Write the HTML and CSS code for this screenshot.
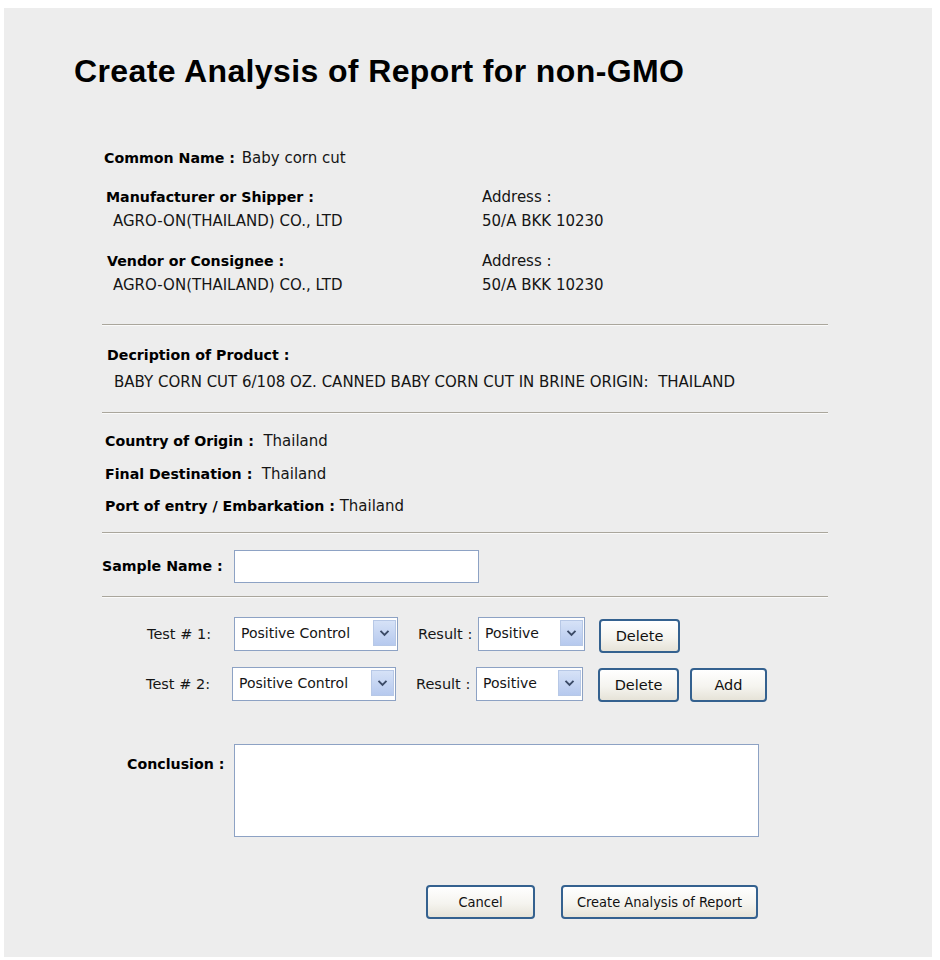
FILE: index.html
```html
<!DOCTYPE html>
<html>
<head>
<meta charset="utf-8">
<title>Create Analysis of Report for non-GMO</title>
<link rel="stylesheet" href="styles.css">
</head>
<body>
<div class="page">
  <h1 class="title">Create Analysis of Report for non-GMO</h1>
  <div class="content">
    <div class="line common"><b>Common Name :</b> Baby corn cut</div>

    <div class="party">
      <div class="col">
        <div class="line lbl"><b>Manufacturer or Shipper :</b></div>
        <div class="line val">AGRO-ON(THAILAND) CO., LTD</div>
      </div>
      <div class="col addr">
        <div class="line">Address :</div>
        <div class="line">50/A BKK 10230</div>
      </div>
    </div>

    <div class="party second">
      <div class="col">
        <div class="line lbl"><b>Vendor or Consignee :</b></div>
        <div class="line val">AGRO-ON(THAILAND) CO., LTD</div>
      </div>
      <div class="col addr">
        <div class="line">Address :</div>
        <div class="line">50/A BKK 10230</div>
      </div>
    </div>

    <hr class="sep sep1">

    <div class="desc">
      <div class="line lbl"><b>Decription of Product :</b></div>
      <div class="line val desc-val">BABY CORN CUT 6/108 OZ. CANNED BABY CORN CUT IN BRINE ORIGIN:&nbsp; THAILAND</div>
    </div>

    <hr class="sep sep2">

    <div class="origin">
      <div class="oline"><b>Country of Origin :</b>&nbsp; Thailand</div>
      <div class="oline"><b>Final Destination :</b>&nbsp; Thailand</div>
      <div class="oline"><b>Port of entry / Embarkation :</b> Thailand</div>
    </div>

    <hr class="sep sep3">

    <div class="sample">
      <label class="sample-lbl"><b>Sample Name :</b></label>
      <input class="text-input" type="text">
    </div>

    <hr class="sep sep4">

    <div class="tests">
      <div class="test-row">
        <span class="test-lbl">Test # 1:</span>
        <div class="select sel-test"><span class="sel-text">Positive Control</span><span class="sel-arrow"><svg width="11" height="8" viewBox="0 0 11 8"><path d="M1.5 1.8 L5.5 5.8 L9.5 1.8" fill="none" stroke="#3b4a66" stroke-width="1.9"/></svg></span></div>
        <span class="res-lbl">Result :</span>
        <div class="select sel-res"><span class="sel-text">Positive</span><span class="sel-arrow"><svg width="11" height="8" viewBox="0 0 11 8"><path d="M1.5 1.8 L5.5 5.8 L9.5 1.8" fill="none" stroke="#3b4a66" stroke-width="1.9"/></svg></span></div>
        <button class="btn btn-del" type="button">Delete</button>
      </div>
      <div class="test-row row2">
        <span class="test-lbl">Test # 2:</span>
        <div class="select sel-test"><span class="sel-text">Positive Control</span><span class="sel-arrow"><svg width="11" height="8" viewBox="0 0 11 8"><path d="M1.5 1.8 L5.5 5.8 L9.5 1.8" fill="none" stroke="#3b4a66" stroke-width="1.9"/></svg></span></div>
        <span class="res-lbl">Result :</span>
        <div class="select sel-res"><span class="sel-text">Positive</span><span class="sel-arrow"><svg width="11" height="8" viewBox="0 0 11 8"><path d="M1.5 1.8 L5.5 5.8 L9.5 1.8" fill="none" stroke="#3b4a66" stroke-width="1.9"/></svg></span></div>
        <button class="btn btn-del" type="button">Delete</button>
        <button class="btn btn-add" type="button">Add</button>
      </div>
    </div>

    <div class="conclusion">
      <label class="concl-lbl"><b>Conclusion :</b></label>
      <textarea class="concl-area"></textarea>
    </div>

    <div class="actions">
      <button class="btn btn-cancel" type="button">Cancel</button>
      <button class="btn btn-create" type="button">Create Analysis of Report</button>
    </div>
  </div>
</div>
</body>
</html>
```

FILE: styles.css
```css
html, body {
  margin: 0;
  padding: 0;
  background: #ffffff;
}

body {
  font-family: "DejaVu Sans", sans-serif;
  font-size: 15px;
  color: #151515;
}

.page {
  margin: 8px 8px 0 4px;
  width: 928px;
  height: 949px;
  background: #ededed;
  box-sizing: border-box;
  padding-top: 45px;
}

.title {
  margin: 0 0 0 70px;
  font-family: "Liberation Sans", Arial, sans-serif;
  font-weight: bold;
  font-size: 32px;
  line-height: 36px;
  color: #000;
  letter-spacing: 0.38px;
  height: 35px;
}

.content {
  margin-left: 98px;
  width: 726px;
}

.line {
  line-height: 24px;
  height: 24px;
  white-space: nowrap;
}

b {
  font-weight: bold;
  font-size: 14.2px;
  color: #000;
}

.common {
  margin-top: 58px;
  padding-left: 2px;
}

.common b {
  margin-right: 2px;
}

.party {
  display: grid;
  grid-template-columns: 380px 1fr;
  margin-top: 15px;
}

.party.second {
  margin-top: 16px;
}

.party .lbl {
  padding-left: 4px;
}

.party .val {
  padding-left: 11px;
}

.party.second .lbl {
  padding-left: 5px;
}

.sep {
  border: none;
  border-top: 1px solid #aaa69c;
  border-bottom: 1px solid #fafafa;
  height: 0;
  margin: 0;
  width: 726px;
}

.sep1 {
  margin-top: 27px;
}

.desc {
  margin-top: 17px;
}

.desc .lbl {
  padding-left: 5px;
}

.desc-val {
  margin-top: 3px;
  padding-left: 12px;
}

.sep2 {
  margin-top: 18px;
}

.origin {
  margin-top: 15px;
  padding-left: 3px;
}

.oline {
  height: 32.5px;
  line-height: 24px;
  white-space: nowrap;
}

.sep3 {
  margin-top: 5px;
}

.sample {
  display: flex;
  align-items: center;
  margin-top: 16px;
  height: 33px;
}

.sample-lbl {
  width: 132px;
}

.text-input {
  width: 245px;
  height: 33px;
  box-sizing: border-box;
  border: 1px solid #8da2c4;
  background: #fff;
  margin: 0;
  padding: 0 4px;
  font: inherit;
}

.sep4 {
  margin-top: 13px;
}

.tests {
  margin-top: 19px;
  font-size: 14.5px;
}

.test-row {
  display: flex;
  align-items: center;
  height: 34px;
}

.test-row.row2 {
  margin-top: 16px;
}

.test-lbl {
  padding-left: 45px;
  box-sizing: border-box;
  flex: none;
  width: 132px;
}

.row2 .test-lbl {
  padding-left: 44px;
  width: 130px;
}

.select {
  display: flex;
  align-items: center;
  height: 34px;
  box-sizing: border-box;
  border: 1px solid #8da2c4;
  background: #fff;
  padding: 2px 1px 4px 6px;
  flex: none;
  font-size: 14px;
}

.sel-test {
  width: 164px;
}

.sel-res {
  width: 107px;
}

.sel-text {
  flex: 1;
  white-space: nowrap;
}

.sel-arrow {
  width: 23px;
  height: 26px;
  box-sizing: border-box;
  border: 1px solid #b7c8e6;
  background: linear-gradient(#d6e2f7, #b6c9ee);
  display: flex;
  align-items: center;
  justify-content: center;
}

.res-lbl {
  margin-left: 20px;
  width: 60px;
  flex: none;
  white-space: nowrap;
}

.btn {
  font-family: "DejaVu Sans Condensed", "DejaVu Sans", sans-serif;
  font-size: 14.5px;
  color: #111;
  height: 34px;
  box-sizing: border-box;
  border: 2px solid #34618f;
  border-radius: 4px;
  background: linear-gradient(#ffffff, #f5f4ef 55%, #e6e3d8);
  padding: 0;
  margin: 0;
}

.btn-del,
.btn-add {
  font-family: "DejaVu Sans", sans-serif;
  font-size: 14.5px;
}

.btn-del {
  width: 81px;
  margin-left: 14px;
  margin-top: 5px;
}

.row2 .btn-del {
  margin-top: 2px;
  margin-left: 15px;
}

.btn-add {
  width: 77px;
  margin-left: 11px;
  margin-top: 2px;
}

.conclusion {
  display: flex;
  align-items: flex-start;
  margin-top: 43px;
}

.concl-lbl {
  width: 132px;
  padding-left: 25px;
  box-sizing: border-box;
  line-height: 24px;
  margin-top: 8px;
  white-space: nowrap;
}

.concl-area {
  width: 525px;
  height: 93px;
  box-sizing: border-box;
  border: 1px solid #8da2c4;
  background: #fff;
  margin: 0;
  resize: none;
  font: inherit;
}

.actions {
  display: flex;
  margin-top: 48px;
  padding-left: 324px;
}

.btn-cancel {
  width: 109px;
}

.btn-create {
  width: 197px;
  margin-left: 26px;
}
```
